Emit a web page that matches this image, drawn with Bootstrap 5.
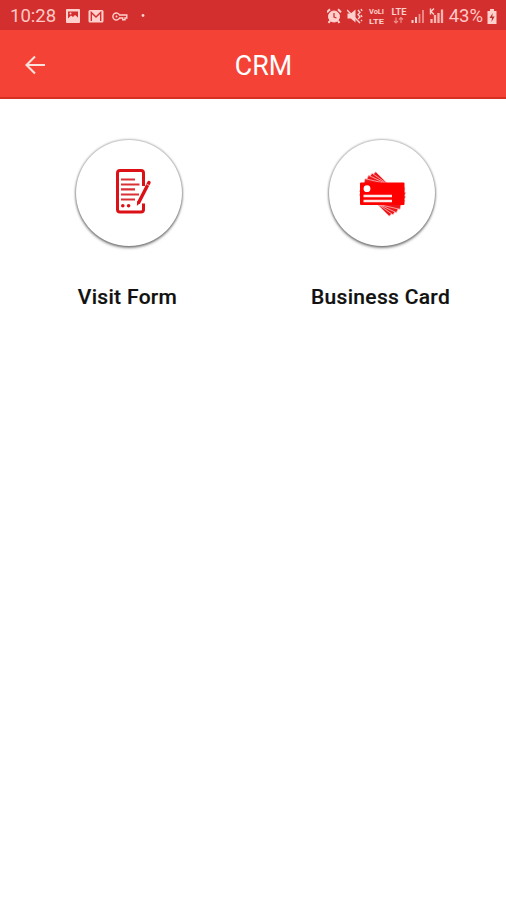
<!DOCTYPE html>
<html lang="en">
<head>
<meta charset="utf-8">
<meta name="viewport" content="width=device-width, initial-scale=1">
<title>CRM</title>
<link href="https://cdn.jsdelivr.net/npm/bootstrap@5.3.0/dist/css/bootstrap.min.css" rel="stylesheet">
<style>
body{font-family:Roboto,"Liberation Sans",sans-serif;min-height:900px;overflow:hidden}
.status-bar{height:30px;background:#d32f2f;color:#ffc9c5;font-size:18.5px;line-height:30px;padding:2px 9px 0 10px}
.status-bar svg{display:block;flex:none}
.clock{width:56px}
.app-bar{height:69px;background:#f44336;border-bottom:2px solid #d83020;padding:4px 14px 0 24px}
.app-title{font-size:26.800px;font-weight:400;line-height:1;padding-top:2px}
.side{width:24px}
.side-end{width:13px}
.tiles{padding:41px 0 0 2px;margin-right:-2px}
.disc{width:106px;height:106px;border-radius:50%;background:#fff;box-shadow:0 0 2px 1px rgba(0,0,0,.26),0 2px 3px rgba(0,0,0,.42)}
.tile-label{font-size:21px;font-weight:500;line-height:26px;margin-top:38px;margin-right:2px;letter-spacing:.32px;color:#111;-webkit-text-stroke:.2px #111}
.signal{margin-left:3px}
.pct{margin-left:5px}
</style>
</head>
<body class="bg-white">
<div class="status-bar d-flex align-items-center justify-content-between">
  <div class="d-flex align-items-center">
    <span class="clock">10:28</span>
    <svg width="14" height="14" viewBox="0 0 14 14"><rect width="14" height="14" rx="1" fill="#ffd0cc"/><path d="M2 2.500h10v6L9 6 7 8 5 6.500 2 9.500z" fill="#d32f2f"/><circle cx="4.500" cy="4.500" r="1" fill="#ffd0cc"/></svg>
    <svg class="ms-2" width="16" height="13" viewBox="0 0 16 13"><rect x=".5" width="15" height="12.500" rx="1.500" fill="#ffd0cc"/><path d="M3.300 11V2.500L8 7l4.700-4.500V11" fill="none" stroke="#d32f2f" stroke-width="1.400"/></svg>
    <svg class="ms-2" width="16" height="9" viewBox="0 0 16 9"><path d="M7.500 3h7.300v3H13v1.800h-2.300V6H7.500A3.500 3.500 0 1 1 7.500 3z" fill="none" stroke="#ffd0cc" stroke-width="1.400"/><circle cx="4.500" cy="4.500" r="1" fill="#ffd0cc"/></svg>
    <svg width="20" height="4" viewBox="0 0 20 4"><circle cx="15" cy="1.500" r="1.400" fill="#ffd0cc"/></svg>
  </div>
  <div class="d-flex align-items-center">
    <svg width="16" height="16" viewBox="0 0 16 16"><circle cx="7" cy="8.500" r="5.500" fill="#ffd0cc" stroke="#ffd0cc"/><path d="M0 4.200 3 1.300M14 4.200 11 1.300M3.300 12.500l-1.800 2.300M10.700 12.500l1.800 2.300" stroke="#ffd0cc" stroke-width="2"/><path d="M7 5v4l2.500 1" fill="none" stroke="#d32f2f" stroke-width="1.300"/></svg>
    <svg class="ms-1" width="17" height="16" viewBox="1 0 17 16"><path d="M1.500 5.500h3.300L9.500 1.500v13l-4.700-4H1.500z" fill="#ffd0cc"/><path d="M1 2l13 13" stroke="#ffd0cc" stroke-width="1.500"/><path d="M12 2l2 2.500-2 2 2 2.500-2 2M15 1l1 2M15 7l1 2M15 12l1 1" fill="none" stroke="#ffd0cc" stroke-width="1.400"/></svg>
    <svg class="ms-1" width="19" height="18" viewBox="1 0 19 18" fill="#ffd0cc" font-family="Roboto,sans-serif" font-weight="700" font-size="7.600"><text x="2" y="7" textLength="15" lengthAdjust="spacingAndGlyphs">VoLI</text><text x="2" y="16.500" textLength="15" lengthAdjust="spacingAndGlyphs">LTE</text></svg>
    <svg class="ms-1" width="17" height="17" viewBox="1 0 17 17" fill="#ffd0cc" font-family="Roboto,sans-serif" font-weight="700" font-size="8.500"><text x="1.500" y="7" textLength="15" lengthAdjust="spacingAndGlyphs">LTE</text><path d="M6 9.500v5.500M4 13l2 2 2-2M11 15V9.500M9 11.500l2-2 2 2" fill="none" stroke="#ed8f8b" stroke-width="1.200"/></svg>
    <svg class="signal" width="15" height="15" viewBox="1 0 15 15"><path d="M2.500 14v-3M6 14V8" stroke="#ffd0cc" stroke-width="2"/><path d="M9.500 14V5M13 14V1" stroke="#ee908b" stroke-width="1.800"/></svg>
    <svg class="signal" width="15" height="16" viewBox="0 0 15 16"><path d="M2.500 15v-4M6 15V7M9.500 15V5M13 15V1.500" stroke="#f8b5b1" stroke-width="2.300"/><path d="M1.500 6.500V.5M5 .5 2 3.500l3 3" fill="none" stroke="#ffd0cc" stroke-width="1.400"/></svg>
    <span class="pct">43%</span>
    <svg class="ms-1" width="10" height="15" viewBox="0 0 10 15"><path d="M3 0h4v2h2.500v13H.5V2H3z" fill="#ffd0cc"/><path d="M5.800 4 2.500 9H5l-.6 4L7.700 7.500H5.200z" fill="#b93030"/></svg>
  </div>
</div>
<nav class="app-bar d-flex align-items-center justify-content-between text-white">
  <div class="side"><svg class="d-block" width="22" height="22" viewBox="0 0 22 22"><path d="M11 1.500 2.500 10l8.500 8.500M2.500 10H21" fill="none" stroke="#ffe1dc" stroke-width="2.100"/></svg></div>
  <h1 class="app-title m-0">CRM</h1>
  <div class="side-end"></div>
</nav>
<main class="tiles">
  <div class="row g-0">
    <div class="col-6 d-flex flex-column align-items-center">
      <div class="disc"><svg class="d-block" width="106" height="106" viewBox="76 139 106 106"><path d="M143.500 185v-13q0-2.500-2.500-2.500h-21q-2.500 0-2.500 2.500v36.500q0 2.500 2.500 2.500h21q2.500 0 2.500-2.500v-6" fill="none" stroke="#dc1017" stroke-width="3"/><path d="M121 178.500h14M121 183.500h18.500M121 188.300h14M121 193.500h18M121 198.500h14" stroke="#d93036" stroke-width="2.200"/><circle cx="122.800" cy="204.800" r="1.800" fill="#dc1017"/><circle cx="128.600" cy="204.800" r="1.800" fill="#dc1017"/><path d="M149 181.500 138.700 201.500" stroke="#dc1017" stroke-width="3.400" stroke-linecap="round"/><path d="M137.200 200l3 1.600-3.300 3.400z" fill="#dc1017"/><path d="M146.300 183l3.400 1.800" stroke="#fff" stroke-width=".7"/></svg></div>
      <div class="tile-label">Visit Form</div>
    </div>
    <div class="col-6 d-flex flex-column align-items-center">
      <div class="disc"><svg class="d-block" width="106" height="106" viewBox="328 140 106 106"><g fill="#ed171b" stroke="#ffc4c4" stroke-width=".7"><rect x="361" y="183" width="41" height="22" transform="rotate(45 381.500 194)"/><rect x="361" y="183" width="41" height="22" transform="rotate(35 381.500 194)"/><rect x="361" y="183" width="41" height="22" transform="rotate(25 381.500 194)"/><rect x="361" y="183" width="41" height="22" transform="rotate(13 381.500 194)"/></g><rect x="359" y="182.500" width="44.500" height="22.500" rx="1" fill="#fe0000"/><circle cx="366" cy="188.700" r="3.400" fill="#fff"/><path d="M362.500 196H391M362.500 201H391" stroke="#ffe9e9" stroke-width="2.500"/></svg></div>
      <div class="tile-label">Business Card</div>
    </div>
  </div>
</main>
<script src="https://cdn.jsdelivr.net/npm/bootstrap@5.3.0/dist/js/bootstrap.bundle.min.js"></script>
</body>
</html>
